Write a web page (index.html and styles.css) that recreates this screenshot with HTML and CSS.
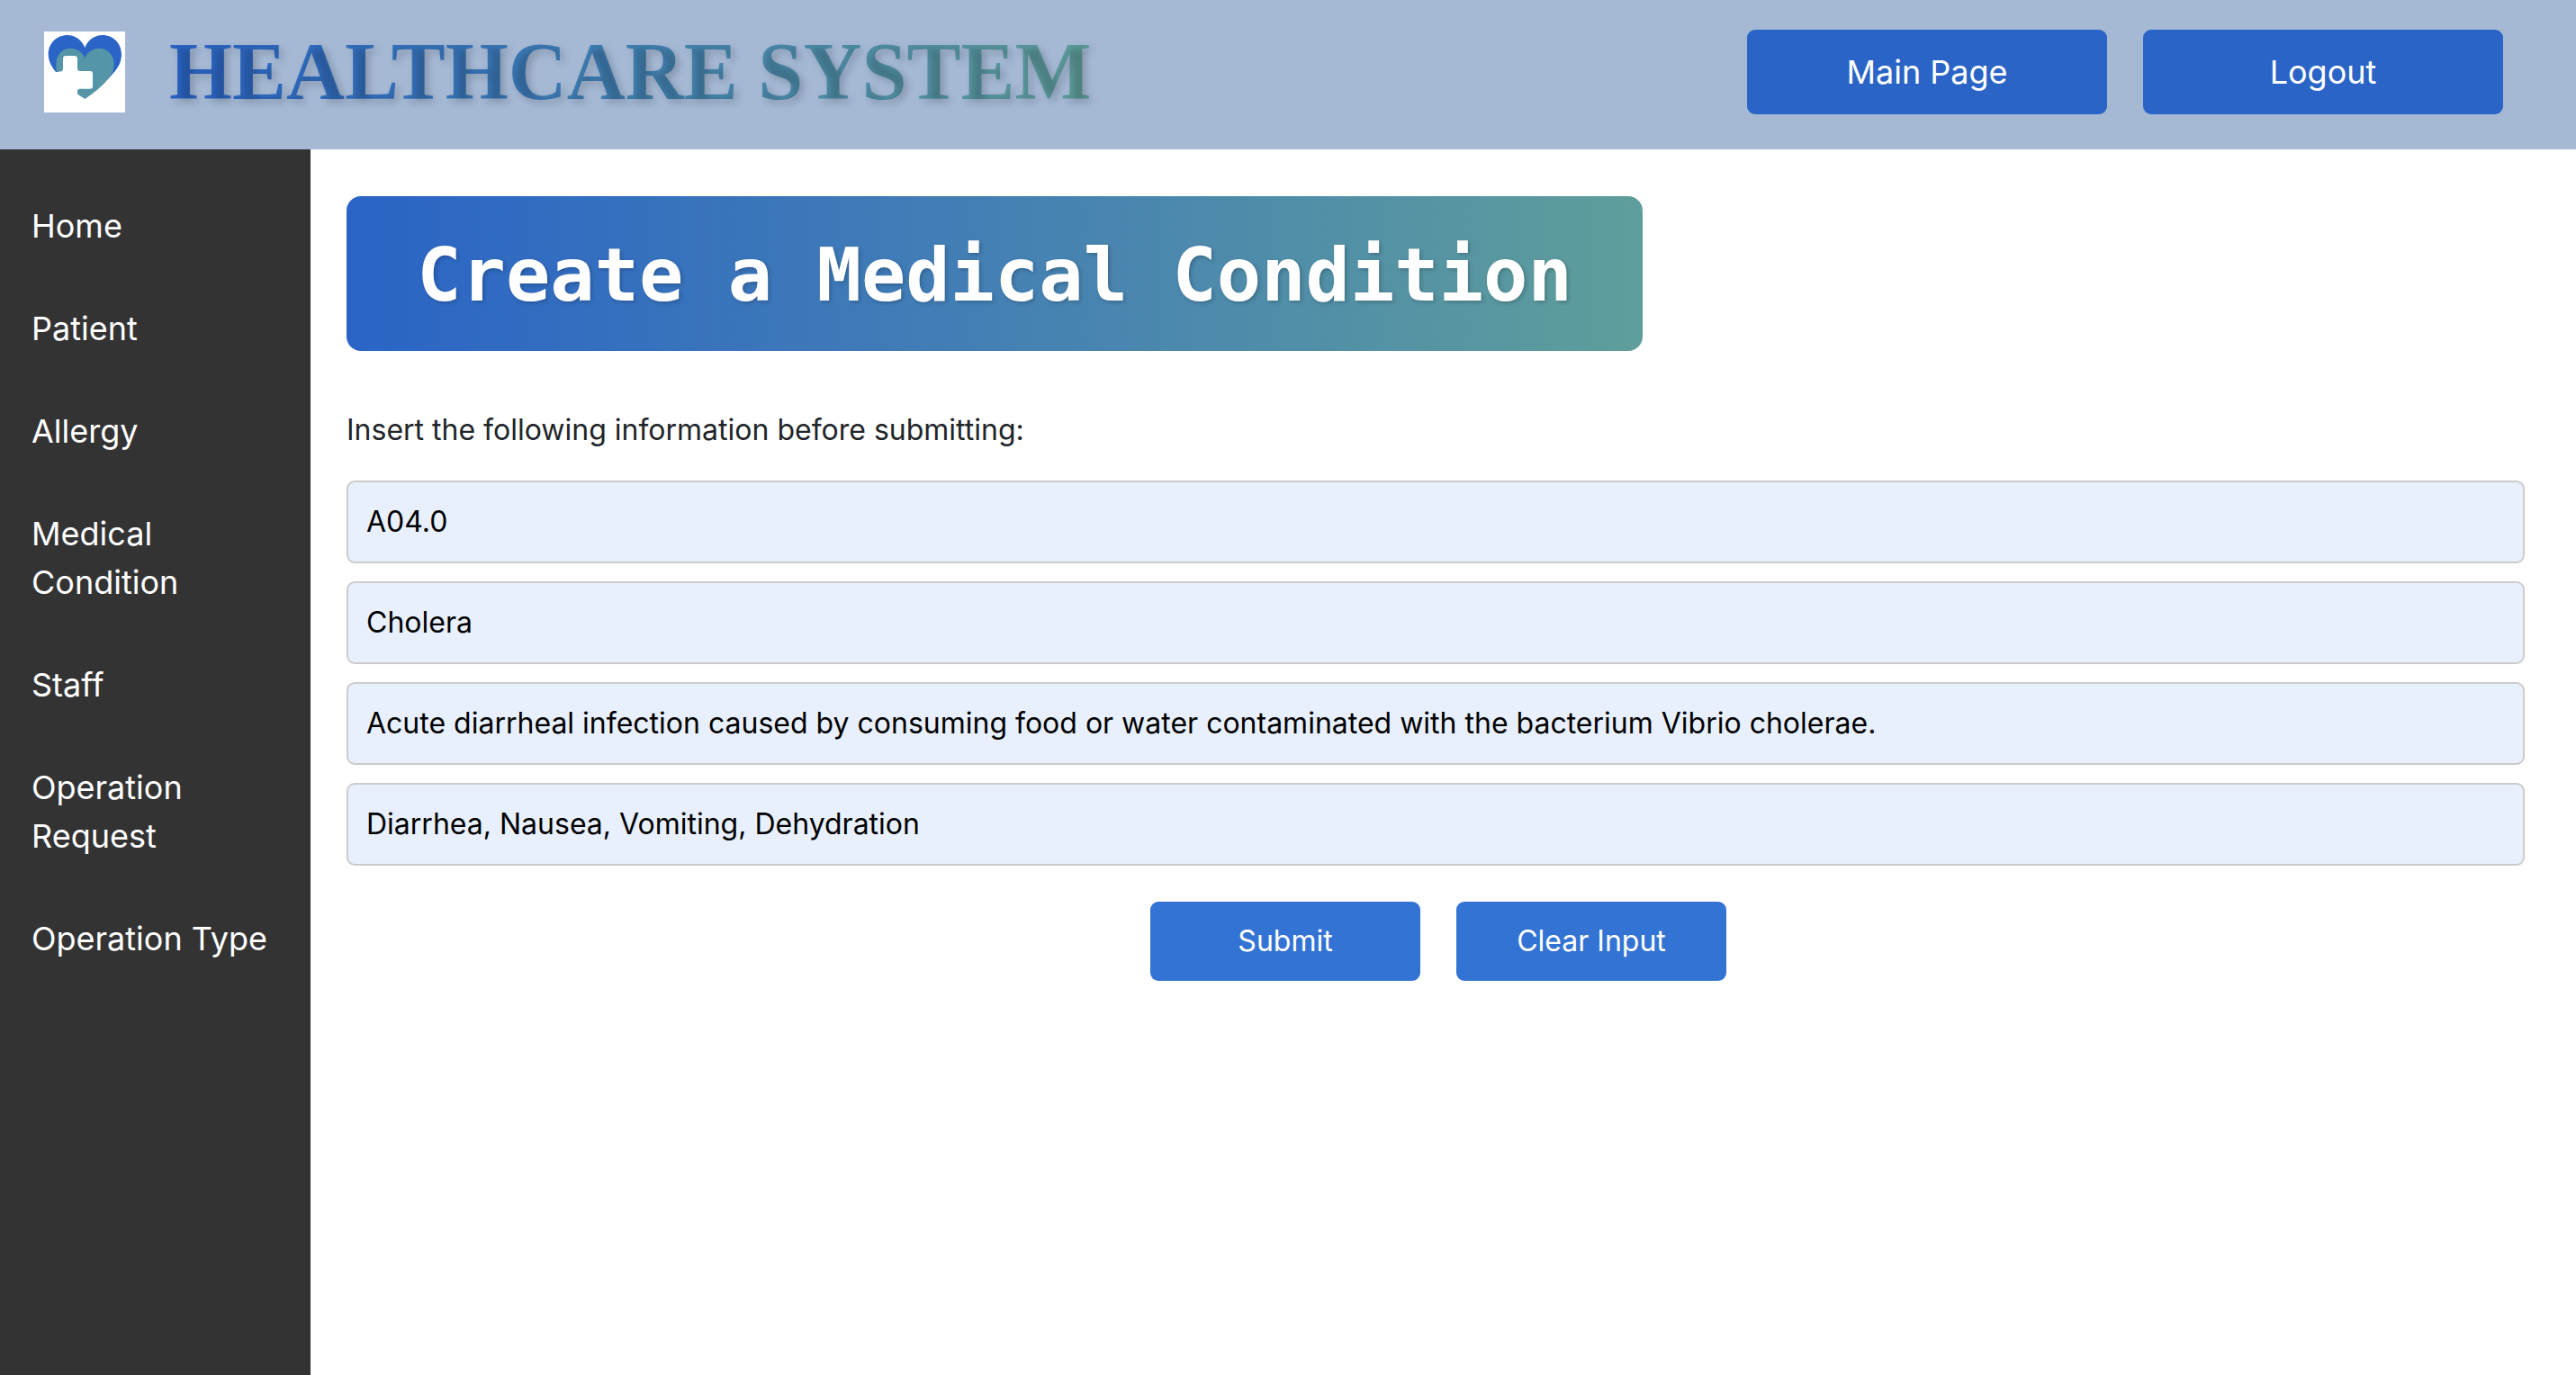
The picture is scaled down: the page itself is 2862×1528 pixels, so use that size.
FILE: index.html
```html
<!DOCTYPE html>
<html lang="en">
<head>
<meta charset="utf-8">
<meta name="viewport" content="width=device-width, initial-scale=1">
<title>Healthcare System</title>
<link rel="stylesheet" href="styles.css">
</head>
<body>
<header class="topbar">
  <svg class="logo" viewBox="0 0 90 90" role="img" aria-label="Healthcare logo">
    <rect width="90" height="90" fill="#fff"/>
    <path fill="#2a64c6" d="M45.300 18C42 9.500 34.500 4 26 4C14 4 4.700 13 4.700 25.500C4.700 33 8.500 39.500 13.300 45.300L16 44.500V32L28 21L45 32L71 53C79 44 86 37 86 25.500C86 13 76.500 4 65 4C56 4 48.500 9.500 45.300 18Z"/>
    <path fill="#5595a8" d="M45.300 29.500C42.500 23 36.500 18.700 29.500 18.700C20 18.700 13.300 26.500 13.300 36C13.300 39.500 13.600 42 14 45L18 44.500Q21 44.500 21 41V30.300Q21 27 24.300 27H33.700Q37 27 37 30.300V41Q37 44 40 44H51Q54 44 54 47V61Q54 63.700 51 63.700H40Q37 63.700 37 66.700V69.500L45.300 75C55 68.500 64 61.500 71 53C75.500 47.500 77.700 42 77.700 36C77.700 26 70 18.700 61.500 18.700C54 18.700 48 23 45.300 29.500Z"/>
  </svg>
  <h1 class="brand">HEALTHCARE SYSTEM</h1>
  <nav class="topnav" aria-label="Account">
    <button type="button" class="btn btn-nav">Main Page</button>
    <button type="button" class="btn btn-nav">Logout</button>
  </nav>
</header>
<div class="layout">
  <nav class="sidebar" aria-label="Sections">
    <a href="#home">Home</a>
    <a href="#patient">Patient</a>
    <a href="#allergy">Allergy</a>
    <a href="#medical-condition">Medical Condition</a>
    <a href="#staff">Staff</a>
    <a href="#operation-request">Operation Request</a>
    <a href="#operation-type">Operation Type</a>
  </nav>
  <main class="content">
    <h2 class="banner">Create a Medical Condition</h2>
    <p class="intro">Insert the following information before submitting:</p>
    <form class="form">
      <input class="field" type="text" name="code" aria-label="Code" value="A04.0">
      <input class="field" type="text" name="designation" aria-label="Designation" value="Cholera">
      <input class="field" type="text" name="description" aria-label="Description" value="Acute diarrheal infection caused by consuming food or water contaminated with the bacterium Vibrio cholerae.">
      <input class="field" type="text" name="symptoms" aria-label="Symptoms" value="Diarrhea, Nausea, Vomiting, Dehydration">
      <div class="actions">
        <button type="submit" class="btn btn-form">Submit</button>
        <button type="reset" class="btn btn-form">Clear Input</button>
      </div>
    </form>
  </main>
</div>
</body>
</html>
```
FILE: styles.css
```css
* {
  box-sizing: border-box;
}

body {
  margin: 0;
  min-height: 100vh;
  display: flex;
  flex-direction: column;
  background: #fff;
  color: #212529;
  font-family: Inter, "Liberation Sans", sans-serif;
  font-size: 32px;
  line-height: 48px;
}

.topbar {
  display: flex;
  align-items: center;
  gap: 49px;
  padding: 33px 81px 39px 49px;
  background: #a5b9d5;
}

.logo {
  flex: none;
  width: 90px;
  height: 90px;
}

.brand {
  margin: 0;
  font-family: "Liberation Serif", serif;
  font-size: 90px;
  font-weight: 700;
  line-height: 94px;
  color: transparent;
  background: linear-gradient(to right, #2a64c6, #4180b2 50%, #5f9e9b);
  background-clip: text;
  -webkit-background-clip: text;
  text-shadow: 4px 4px 8px rgba(0, 0, 0, 0.2);
}

.topnav {
  display: flex;
  gap: 40px;
  margin-left: auto;
}

.btn {
  border: 0;
  border-radius: 9px;
  color: #fff;
  font-family: inherit;
  cursor: pointer;
}

.btn-nav {
  width: 400px;
  padding: 20px;
  background: #2a64c6;
  font-size: 36px;
  line-height: 54px;
}

.layout {
  flex: 1;
  display: flex;
}

.sidebar {
  flex: none;
  display: flex;
  flex-direction: column;
  gap: 60px;
  width: 345px;
  padding: 58px 35px;
  background: #333;
}

.sidebar a {
  color: #fff;
  font-size: 36px;
  line-height: 54px;
  text-decoration: none;
}

.content {
  flex: 1;
  min-width: 0;
  padding: 52px 57px 52px 40px;
}

.banner {
  max-width: 1440px;
  margin: 0 0 64px;
  padding: 34px 32px 30px;
  border-radius: 16px;
  background: linear-gradient(to right, #2a64c6, #4480b4 50%, #5f9e9b);
  color: #fff;
  font-family: "DejaVu Sans Mono", monospace;
  font-size: 82px;
  font-weight: 700;
  line-height: 108px;
  text-align: center;
  text-shadow: 2px 2px 4px rgba(0, 0, 0, 0.2);
}

.intro {
  margin: 0 0 32px;
}

.form {
  display: flex;
  flex-direction: column;
  gap: 20px;
}

.field {
  width: 100%;
  padding: 20px;
  border: 2px solid #ccc;
  border-radius: 9px;
  background: #e8f0fe;
  color: #000;
  font-family: inherit;
  font-size: 32px;
  line-height: 48px;
}

.actions {
  display: flex;
  justify-content: center;
  gap: 40px;
  padding: 20px 0 0 6px;
}

.btn-form {
  width: 300px;
  padding: 20px;
  background: #3273d4;
  font-size: 32px;
  line-height: 48px;
}
```
